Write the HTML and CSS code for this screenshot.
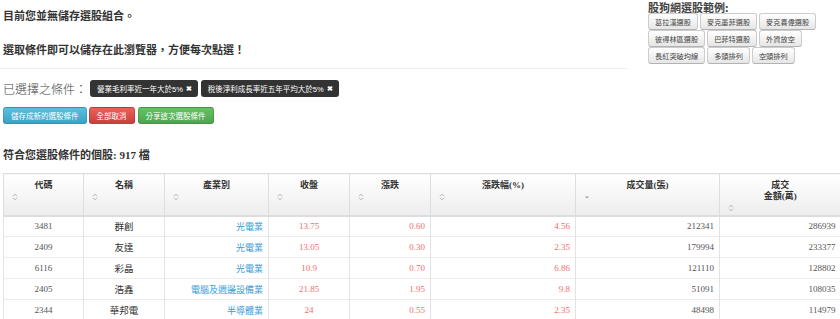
FILE: index.html
```html
<!DOCTYPE html>
<html>
  <head>
    <meta charset="UTF-8" />
    <title>選股結果</title>
    <link rel="stylesheet" href="styles.css">
  </head>
  <body>
    <div class="top">
      <div class="saved">
        <p class="msg msg-first">目前您並無儲存選股組合。</p>
        <p class="msg msg-second">選取條件即可以儲存在此瀏覽器，方便每次點選！</p>
        <hr class="divider" />

        <div class="chosen">
          <span class="chosen-label">已選擇之條件：</span>
          <span class="tag">營業毛利率近一年大於5% <b class="tag-x">✖</b></span>
          <span class="tag">稅後淨利成長率近五年平均大於5% <b class="tag-x">✖</b></span>
        </div>

        <div class="actions">
          <button class="btn btn-info">儲存成新的選股條件</button>
          <button class="btn btn-danger">全部取消</button>
          <button class="btn btn-success">分享這次選股條件</button>
        </div>
      </div>

      <div class="examples">
        <div class="examples-title">股狗網選股範例:</div>
        <div class="example-row">
          <button class="ex-btn">葛拉漢選股</button>
          <button class="ex-btn">麥克墨菲選股</button>
          <button class="ex-btn">麥克喜偉選股</button>
        </div>
        <div class="example-row">
          <button class="ex-btn">彼得林區選股</button>
          <button class="ex-btn">巴菲特選股</button>
          <button class="ex-btn">外資放空</button>
        </div>
        <div class="example-row">
          <button class="ex-btn">長紅突破均線</button>
          <button class="ex-btn">多頭排列</button>
          <button class="ex-btn">空頭排列</button>
        </div>
      </div>
    </div>

    <h4 class="result-title">符合您選股條件的個股: 917 檔</h4>

    <div class="table-wrap">
      <table class="stocks">
        <colgroup>
          <col style="width: 80px" />
          <col style="width: 81px" />
          <col style="width: 104px" />
          <col style="width: 81px" />
          <col style="width: 81px" />
          <col style="width: 145px" />
          <col style="width: 144px" />
          <col style="width: 121px" />
        </colgroup>
        <thead>
          <tr>
            <th><div class="th-title">代碼</div><div class="sort"><svg width="6" height="8" viewBox="0 0 6 8"><path d="M1 3.2L3 1.2L5 3.2M1 4.8L3 6.8L5 4.8" fill="none" stroke="#aaa" stroke-width="0.9"/></svg></div></th>
            <th><div class="th-title">名稱</div><div class="sort"><svg width="6" height="8" viewBox="0 0 6 8"><path d="M1 3.2L3 1.2L5 3.2M1 4.8L3 6.8L5 4.8" fill="none" stroke="#aaa" stroke-width="0.9"/></svg></div></th>
            <th><div class="th-title">產業別</div><div class="sort"><svg width="6" height="8" viewBox="0 0 6 8"><path d="M1 3.2L3 1.2L5 3.2M1 4.8L3 6.8L5 4.8" fill="none" stroke="#aaa" stroke-width="0.9"/></svg></div></th>
            <th><div class="th-title">收盤</div><div class="sort"><svg width="6" height="8" viewBox="0 0 6 8"><path d="M1 3.2L3 1.2L5 3.2M1 4.8L3 6.8L5 4.8" fill="none" stroke="#aaa" stroke-width="0.9"/></svg></div></th>
            <th><div class="th-title">漲跌</div><div class="sort"><svg width="6" height="8" viewBox="0 0 6 8"><path d="M1 3.2L3 1.2L5 3.2M1 4.8L3 6.8L5 4.8" fill="none" stroke="#aaa" stroke-width="0.9"/></svg></div></th>
            <th><div class="th-title">漲跌幅(%)</div><div class="sort"><svg width="6" height="8" viewBox="0 0 6 8"><path d="M1 3.2L3 1.2L5 3.2M1 4.8L3 6.8L5 4.8" fill="none" stroke="#aaa" stroke-width="0.9"/></svg></div></th>
            <th><div class="th-title">成交量(張)</div><div class="sort"><svg width="6" height="8" viewBox="0 0 6 8"><path d="M1 3.5L5 3.5L3 5.5Z" fill="#999"/></svg></div></th>
            <th><div class="th-title">成交<br />金額(萬)</div><div class="sort"><svg width="6" height="8" viewBox="0 0 6 8"><path d="M1 3.2L3 1.2L5 3.2M1 4.8L3 6.8L5 4.8" fill="none" stroke="#aaa" stroke-width="0.9"/></svg></div></th>
          </tr>
        </thead>
        <tbody>
          <tr>
            <td class="c">3481</td><td class="c name">群創</td><td class="r ind">光電業</td>
            <td class="c up">13.75</td><td class="r up">0.60</td><td class="r up">4.56</td>
            <td class="r">212341</td><td class="r">286939</td>
          </tr>
          <tr>
            <td class="c">2409</td><td class="c name">友達</td><td class="r ind">光電業</td>
            <td class="c up">13.05</td><td class="r up">0.30</td><td class="r up">2.35</td>
            <td class="r">179994</td><td class="r">233377</td>
          </tr>
          <tr>
            <td class="c">6116</td><td class="c name">彩晶</td><td class="r ind">光電業</td>
            <td class="c up">10.9</td><td class="r up">0.70</td><td class="r up">6.86</td>
            <td class="r">121110</td><td class="r">128802</td>
          </tr>
          <tr>
            <td class="c">2405</td><td class="c name">浩鑫</td><td class="r ind">電腦及週邊設備業</td>
            <td class="c up">21.85</td><td class="r up">1.95</td><td class="r up">9.8</td>
            <td class="r">51091</td><td class="r">108035</td>
          </tr>
          <tr>
            <td class="c">2344</td><td class="c name">華邦電</td><td class="r ind">半導體業</td>
            <td class="c up">24</td><td class="r up">0.55</td><td class="r up">2.35</td>
            <td class="r">48498</td><td class="r">114979</td>
          </tr>
        </tbody>
      </table>
    </div>
  </body>
</html>
```

FILE: styles.css
```css
* {
  margin: 0;
  padding: 0;
  box-sizing: border-box;
}

body {
  font-family: "Liberation Serif", "Noto Sans CJK TC", serif;
  color: #333;
  background: #fff;
  overflow: hidden;
}

.top {
  display: flex;
  align-items: flex-start;
}

.saved {
  width: 627px;
}

.msg {
  padding-left: 3px;
  font-size: 11px;
  font-weight: bold;
  line-height: 16px;
  color: #333;
}

.msg-first {
  margin-top: 8px;
}

.msg-second {
  margin-top: 18px;
}

.divider {
  margin-top: 10px;
  border: 0;
  border-top: 1px solid #eee;
}

.chosen {
  display: flex;
  align-items: center;
  gap: 3px;
  margin-top: 11px;
  padding-left: 3px;
  height: 17px;
}

.chosen-label {
  font-family: "Noto Sans CJK TC", sans-serif;
  font-size: 12px;
  font-weight: 300;
  color: #444;
  width: 84px;
  white-space: nowrap;
}

.tag {
  display: inline-flex;
  align-items: center;
  height: 17px;
  padding: 0 6px 0 7px;
  background: #333;
  border-radius: 3px;
  color: #fff;
  font-family: "Liberation Sans", "Noto Sans CJK TC", sans-serif;
  font-size: 7.5px;
  white-space: nowrap;
}

.tag-x {
  margin-left: 3px;
  font-size: 7px;
}

.actions {
  display: flex;
  gap: 2px;
  margin-top: 10px;
  padding-left: 3px;
}

.btn {
  height: 17px;
  padding: 0 7px;
  border: 1px solid rgba(0, 0, 0, 0.12);
  border-bottom-color: rgba(0, 0, 0, 0.25);
  border-radius: 3px;
  color: #fff;
  font-family: "Liberation Sans", "Noto Sans CJK TC", sans-serif;
  font-size: 7.5px;
  white-space: nowrap;
}

.btn-info {
  background: linear-gradient(#5bc0de, #3aa3c8);
}

.btn-danger {
  background: linear-gradient(#ee5f5b, #c9413b);
}

.btn-success {
  margin-left: 1px;
  background: linear-gradient(#62c462, #51a351);
}

.examples {
  margin-left: 21px;
  width: 192px;
}

.examples-title {
  padding-top: 1px;
  font-family: "Noto Sans CJK TC", sans-serif;
  font-size: 11px;
  font-weight: bold;
  line-height: 12px;
  color: #444;
}

.example-row {
  display: flex;
  gap: 2px;
}

.ex-btn {
  height: 17px;
  padding: 0 6px;
  border: 1px solid #ccc;
  border-bottom-color: #b3b3b3;
  border-radius: 3px;
  background: linear-gradient(#fff, #e6e6e6);
  color: #444;
  font-family: "Noto Sans CJK TC", sans-serif;
  font-size: 7.2px;
  white-space: nowrap;
}

.result-title {
  margin-top: 23px;
  padding-left: 3px;
  font-size: 11px;
  font-weight: bold;
  line-height: 16px;
  color: #333;
}

.table-wrap {
  margin-top: 10px;
  padding-left: 3px;
  overflow: hidden;
}

.stocks {
  width: 837px;
  table-layout: fixed;
  border-collapse: collapse;
  border: 1px solid #ddd;
  border-right: 0;
}

.stocks th {
  height: 42px;
  padding: 6px 8px 0;
  vertical-align: top;
  background: linear-gradient(#fff, #ededed);
  border-left: 1px solid #ddd;
  border-bottom: 2px solid #ddd;
  font-size: 9px;
  font-weight: bold;
  line-height: 11px;
  color: #333;
  text-align: center;
}

.sort {
  height: 11px;
  display: flex;
  align-items: center;
}

.stocks td {
  height: 21px;
  padding: 0 5px;
  border-left: 1px solid #e3e3e3;
  border-top: 1px solid #ececec;
  font-size: 9px;
  color: #555;
  white-space: nowrap;
}

.stocks tbody tr:first-child td {
  border-top: 0;
}

.c {
  text-align: center;
}

.r {
  text-align: right;
}

.stocks td.name {
  font-family: "Noto Sans CJK TC", sans-serif;
  font-size: 9.5px;
  color: #333;
}

.stocks td.ind {
  font-family: "Noto Sans CJK TC", sans-serif;
  color: #3a9ad9;
}

.stocks td.up {
  color: #f26d6d;
}
```
